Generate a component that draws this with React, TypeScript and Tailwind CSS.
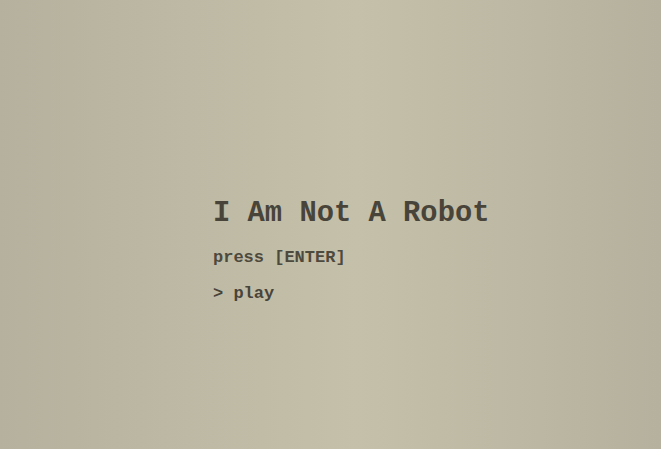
export default function App() {
  return (
    <main className="min-h-screen w-full bg-[linear-gradient(90deg,#b6b19e_0%,#c5c0a9_54%,#b6b19e_100%)] font-['Liberation_Mono',monospace] font-bold text-[#48443a]">
      <div className="flex justify-center pt-[196px]">
        <div className="w-[235px] whitespace-nowrap">
          <h1 className="text-[28.8px] leading-[36px]">I Am Not A Robot</h1>
          <p className="mt-[15px] text-[17px] leading-[22px] text-[#4d493d]">press [ENTER]</p>
          <p className="mt-[14px] text-[17px] leading-[22px]">&gt; play</p>
        </div>
      </div>
    </main>
  );
}
